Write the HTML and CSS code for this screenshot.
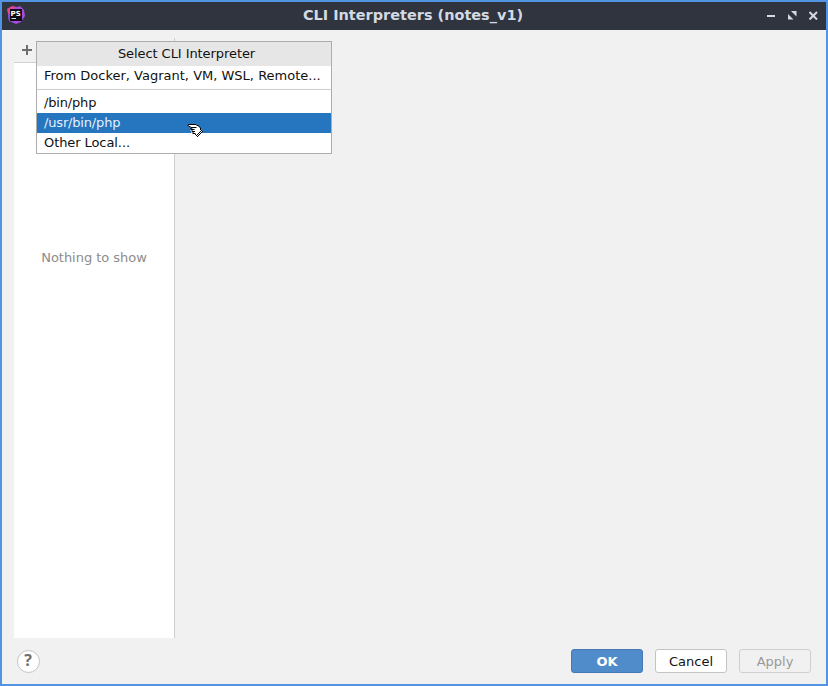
FILE: index.html
```html
<!DOCTYPE html>
<html lang="en">
<head>
<meta charset="utf-8">
<title>CLI Interpreters (notes_v1)</title>
<link rel="stylesheet" href="styles.css">
</head>
<body>
<div class="window">
  <header class="titlebar">
    <svg class="app-icon" width="20" height="20" viewBox="0 0 20 20">
      <path d="M1 4 6 1 11 2 8 18 3 14Z" fill="#e4478f"/>
      <path d="M8 3 14 1 18 5 19 11 15 17 10 19 3 16 2 10Z" fill="#a64bdf"/>
      <path d="M2 10 5 8 8 17 3 16Z" fill="#7950d8"/>
      <rect x="4" y="4" width="12" height="12" fill="#100a14"/>
      <text x="4.600" y="10.500" class="app-letters">PS</text>
      <path d="M5.500 13.500h4.500" stroke="#ddd"/>
    </svg>
    <h1 class="title">CLI Interpreters (notes_v1)</h1>
    <div class="controls">
      <svg width="9" height="9" viewBox="0 0 9 9"><path d="M0 5h8" stroke="#d3dae3" stroke-width="2"/></svg>
      <svg width="9" height="9" viewBox="0 0 9 9"><path d="M3 0h5.500v5.500zM0 3v5.500h5.500z" fill="#d3dae3"/></svg>
      <svg width="9" height="9" viewBox="0 0 9 9"><path d="M.5 1l7.500 7.500M8 1l-7.500 7.500" stroke="#d3dae3" stroke-width="2"/></svg>
    </div>
  </header>
  <main class="content">
    <aside class="sidebar">
      <div class="toolbar">
        <svg class="add" width="10" height="10" viewBox="0 0 10 10"><path d="M0 5h10M5 0v10" stroke="#6e6e6e" stroke-width="2"/></svg>
      </div>
      <div class="list"><span class="empty">Nothing to show</span></div>
    </aside>
    <section class="details"></section>
  </main>
  <footer class="footer">
    <button class="help">?</button>
    <div class="actions">
      <button class="btn primary">OK</button>
      <button class="btn">Cancel</button>
      <button class="btn disabled" disabled>Apply</button>
    </div>
  </footer>
  <div class="popup">
    <div class="popup-title">Select CLI Interpreter</div>
    <div class="item">From Docker, Vagrant, VM, WSL, Remote...</div>
    <div class="separator"></div>
    <div class="item path">/bin/php</div>
    <div class="item path selected">/usr/bin/php</div>
    <div class="item local">Other Local...</div>
  </div>
  <svg class="cursor" width="17" height="16" viewBox="0 0 17 16">
    <path d="M1.500 1.500h8l3 2.500 3 4.500-5 6-2.500-2.500H5.500v-2H4.500v-2H3.500v-2h3L1.500 3.500Z" fill="#fff"/>
    <path d="M1 1.500h8.500M.5 2.500h1M1.500 3.500h2M3.500 4.500h6M3.500 5.500h1M3.500 6.500h4M4.500 7.500h1M5 8.500h3M5.500 9.500h1M5.500 10.500h3M9.500 2.500h2M11.500 3.500h1M12.500 4.500h1M13 5.500h1M13 6.500h1M14 7.500h1M15 8.500h1M14 9.500h1M13 10.500h1M12 11.500h1M11 12.500h1M10 13.500h1M9 12.500h1M8 11.500h1M7 10.500h1M13 8.500h1M12 9.500h1M11 10.500h1M10 11.500h1" fill="none" stroke="#000"/>
  </svg>
</div>
</body>
</html>
```
FILE: styles.css
```css
* { box-sizing: border-box; }
body { margin: 0; font: 13px "DejaVu Sans", sans-serif; color: #111; }
.window {
  position: relative;
  display: flex;
  flex-direction: column;
  width: 828px;
  height: 686px;
  border: 2px solid #5294e2;
  background: #f1f1f1;
}
.titlebar {
  display: flex;
  align-items: center;
  justify-content: space-between;
  height: 28px;
  padding: 0 8px 2px 4px;
  background: #2f343f;
}
.app-icon { width: 20px; margin-right: 33px; }
.app-letters { font: bold 7px "DejaVu Sans", sans-serif; fill: #fff; }
.title { margin: 0; font-size: 14.480px; font-weight: bold; line-height: 26px; color: #d3dae3; }
.controls { display: flex; gap: 12px; }
.content { display: flex; flex: 1; padding: 8px 12px 0; }
.sidebar { display: flex; flex-direction: column; width: 161px; border-right: 1px solid #cdcdcd; }
.toolbar { height: 25px; padding: 7px 8px; border-bottom: 1px solid #d1d1d1; }
.add { display: block; }
.list { flex: 1; padding-top: 187px; background: #fff; text-align: center; line-height: 16px; }
.empty { color: #8c8c8c; letter-spacing: -.03px; }
.details { flex: 1; }
.footer {
  display: flex;
  align-items: center;
  justify-content: space-between;
  height: 46px;
  padding: 0 15px;
}
.help {
  width: 23px;
  height: 23px;
  padding: 0 1px 2px 0;
  border: 1px solid #c4c4c4;
  border-radius: 50%;
  background: #fff;
  color: #6e6e6e;
  font: bold 16px/19px "Open Sans", sans-serif;
}
.actions { display: flex; gap: 12px; }
.btn {
  width: 72px;
  height: 24px;
  padding: 0;
  border: 1px solid #c4c4c4;
  border-radius: 3px;
  background: #fff;
  color: #111;
  font: 13px/24px "DejaVu Sans", sans-serif;
}
.primary { border-color: #4779b4; background: #4f8cc9; color: #fff; font-weight: bold; }
.disabled { background: #f1f1f1; color: #999; border-color: #cfcfcf; }
.popup {
  position: absolute;
  left: 34px;
  top: 39px;
  width: 296px;
  height: 113px;
  border: 1px solid #adadad;
  background: #fff;
}
.popup-title { height: 24px; line-height: 23px; text-align: center; background: #e6e6e6; padding-left: 5px; letter-spacing: -.07px; }
.item { height: 20px; padding-left: 7px; line-height: 19px; white-space: nowrap; }
.path { letter-spacing: -.17px; }
.local { letter-spacing: -.08px; }
.selected { background: #2675bf; color: #e4f0fb; }
.separator { height: 7px; padding-top: 3px; }
.separator::before { content: ""; display: block; height: 1px; background: #cdcdcd; }
.cursor { position: absolute; left: 185px; top: 121px; }
```
